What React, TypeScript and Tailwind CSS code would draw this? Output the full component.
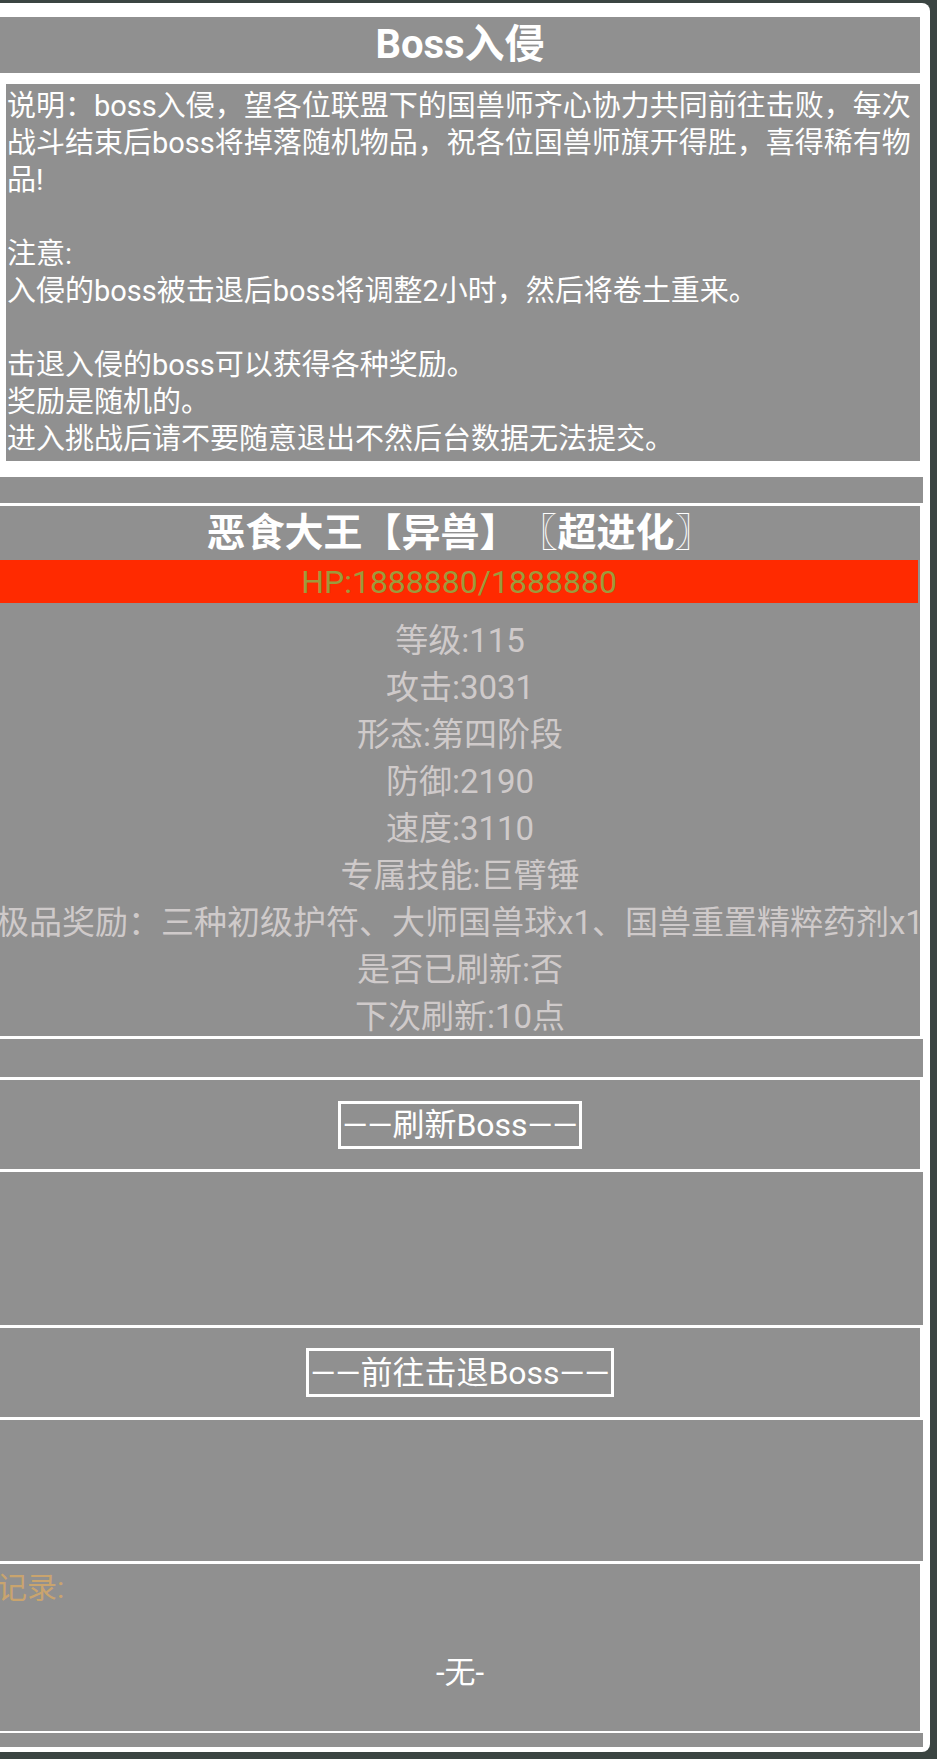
import React from "react";

const font = { fontFamily: "Roboto, 'Noto Sans CJK SC', 'Noto Sans', sans-serif" };

export default function App() {
  const stats = [
    "等级:115",
    "攻击:3031",
    "形态:第四阶段",
    "防御:2190",
    "速度:3110",
    "专属技能:巨臂锤",
    "极品奖励：三种初级护符、大师国兽球x1、国兽重置精粹药剂x1",
    "是否已刷新:否",
    "下次刷新:10点",
  ];
  return (
    <div
      className="w-[937px] h-[1759px] bg-[#3b4542] pt-[3px] overflow-hidden [text-spacing-trim:space-all]"
      style={font}
    >
      <div className="w-[930px] h-[1749px] bg-white rounded-r-[8px] pt-[14px] flex flex-col">
        {/* Title */}
        <div className="w-[920px] h-[56px] bg-[#909090] flex items-center justify-center text-white font-bold text-[40px] leading-none">
          Boss入侵
        </div>
        {/* Description */}
        <div className="ml-[6px] mt-[11px] w-[914px] h-[377px] bg-[#909090] text-white text-[29px] leading-[37px] pl-[1px] pt-[4px] overflow-hidden whitespace-nowrap">
          <div>说明：boss入侵，望各位联盟下的国兽师齐心协力共同前往击败，每次</div>
          <div>战斗结束后boss将掉落随机物品，祝各位国兽师旗开得胜，喜得稀有物</div>
          <div>品!</div>
          <div>&nbsp;</div>
          <div>注意:</div>
          <div>入侵的boss被击退后boss将调整2小时，然后将卷土重来。</div>
          <div>&nbsp;</div>
          <div>击退入侵的boss可以获得各种奖励。</div>
          <div>奖励是随机的。</div>
          <div>进入挑战后请不要随意退出不然后台数据无法提交。</div>
        </div>
        {/* thin */}
        <div className="mt-[16px] w-[923px] h-[26px] bg-[#909090]" />
        {/* Boss block */}
        <div className="mt-[3px] w-[920px] h-[530px] bg-[#909090] overflow-hidden flex flex-col">
          <div className="h-[54px] shrink-0 flex items-center justify-center text-white font-bold text-[39px] leading-none whitespace-nowrap">
            恶食大王【异兽】〖超进化〗
          </div>
          <div className="w-[918px] h-[43px] shrink-0 bg-[#ff2a00] flex items-center justify-center text-[#9c9a3c] text-[32px] leading-none">
            HP:1888880/1888880
          </div>
          <div className="shrink-0 pt-[14px] flex flex-col items-center text-[#cfcaca] text-[33px] leading-[47px]">
            {stats.map((s) => (
              <div key={s} className="whitespace-nowrap">{s}</div>
            ))}
          </div>
        </div>
        {/* thin */}
        <div className="mt-[3px] w-[923px] h-[38px] bg-[#909090]" />
        {/* Refresh */}
        <div className="mt-[3px] w-[920px] h-[89px] bg-[#909090] flex items-center justify-center">
          <div className="border-[3px] border-white h-[48px] px-[1px] flex items-center text-white text-[32px] leading-none whitespace-nowrap">
            ——刷新Boss——
          </div>
        </div>
        {/* empty */}
        <div className="mt-[3px] w-[923px] h-[153px] bg-[#909090]" />
        {/* Attack */}
        <div className="mt-[3px] w-[920px] h-[89px] bg-[#909090] flex items-center justify-center">
          <div className="border-[3px] border-white h-[49px] px-[1px] flex items-center text-white text-[32px] leading-none whitespace-nowrap">
            ——前往击退Boss——
          </div>
        </div>
        {/* empty */}
        <div className="mt-[3px] w-[923px] h-[141px] bg-[#909090]" />
        {/* Record */}
        <div className="mt-[3px] w-[920px] h-[167px] bg-[#909090] flex flex-col">
          <div className="h-[48px] -ml-[3px] flex items-center text-[#c9a46e] text-[30px] leading-none">记录:</div>
          <div className="mt-[40px] text-center text-white text-[31px] leading-[42px]">-无-</div>
        </div>
        {/* bottom */}
        <div className="mt-[2px] w-[923px] h-[14px] bg-[#909090]" />
      </div>
    </div>
  );
}
